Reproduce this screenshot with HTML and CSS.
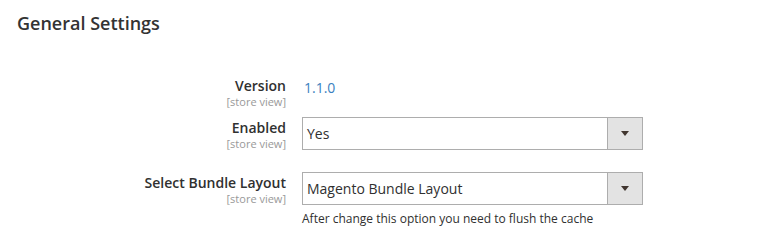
FILE: index.html
```html
<!DOCTYPE html>
<html lang="en">
<head>
    <meta charset="UTF-8">
    <title>General Settings</title>
    <link rel="stylesheet" href="styles.css">
</head>
<body>
<div class="section">
    <h2 class="section-title">General Settings</h2>

    <div class="fieldset">
        <div class="row row-version">
            <div class="label">
                <span class="label-text">Version</span>
                <span class="scope">[store view]</span>
            </div>
            <div class="control">
                <span class="value">1.1.0</span>
            </div>
        </div>

        <div class="row row-enabled">
            <div class="label">
                <span class="label-text">Enabled</span>
                <span class="scope">[store view]</span>
            </div>
            <div class="control">
                <div class="select">
                    <span class="select-text">Yes</span>
                    <span class="select-arrow"></span>
                </div>
            </div>
        </div>

        <div class="row">
            <div class="label">
                <span class="label-text">Select Bundle Layout</span>
                <span class="scope">[store view]</span>
            </div>
            <div class="control">
                <div class="select">
                    <span class="select-text">Magento Bundle Layout</span>
                    <span class="select-arrow"></span>
                </div>
                <p class="note">After change this option you need to flush the cache</p>
            </div>
        </div>
    </div>
</div>
</body>
</html>
```

FILE: styles.css
```css
*{
    margin: 0px;
    padding: 0px;
    box-sizing: border-box;
}

body{
    font-family: 'Open Sans', sans-serif;
    background-color: #ffffff;
    color: #303030;
}

.section {
    padding: 11px 17px;
}

.section-title {
    font-size: 18px;
    font-weight: 600;
    color: #333;
    line-height: 24px;
}

.fieldset {
    margin-top: 41px;
    display: flex;
    flex-direction: column;
}

.row {
    display: flex;
    gap: 16px;
}

.row-version {
    margin-bottom: 8px;
}

.row-enabled {
    margin-bottom: 21px;
}

.label {
    width: 269px;
    display: flex;
    flex-direction: column;
    align-items: flex-end;
    text-align: right;
    padding-top: 1px;
}

.row-version .label {
    padding-top: 0px;
}

.label-text {
    font-size: 14px;
    font-weight: 600;
    line-height: 19px;
    color: #303030;
}

.scope {
    font-size: 11px;
    line-height: 14px;
    color: #999;
}

.control {
    width: 341px;
}

.value {
    display: inline-block;
    padding-left: 2px;
    font-size: 14px;
    line-height: 19px;
    color: #3b7fc0;
}

.select {
    height: 33px;
    border: 1px solid #adadad;
    display: flex;
    align-items: center;
    background: #fff;
}

.select-text {
    flex: 1;
    padding-left: 4px;
    font-size: 14px;
}

.select-arrow {
    width: 35px;
    height: 100%;
    background: #e3e3e3;
    border-left: 1px solid #adadad;
    display: flex;
    align-items: center;
    justify-content: center;
}

.select-arrow::after {
    content: '';
    border-left: 4px solid transparent;
    border-right: 4px solid transparent;
    border-top: 5px solid #41362f;
}

.note {
    margin-top: 6px;
    font-size: 12px;
    line-height: 16px;
    color: #303030;
}
```
